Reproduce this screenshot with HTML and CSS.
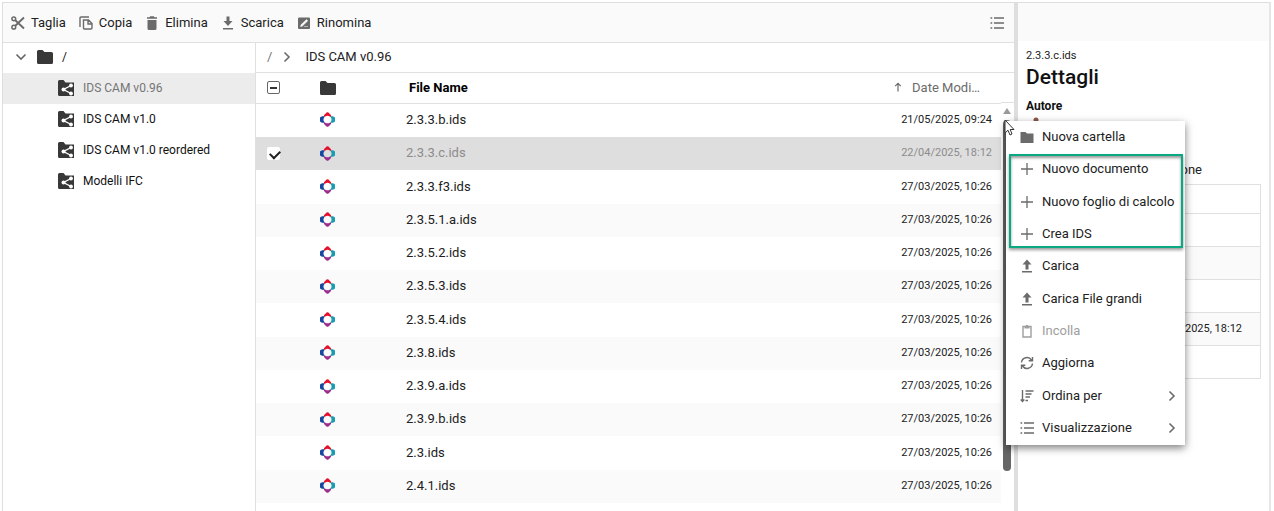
FILE: index.html
```html
<!DOCTYPE html>
<html lang="it">
<head>
    <meta charset="UTF-8">
    <meta name="viewport" content="width=device-width, initial-scale=1.0">
    <title>IDS CAM v0.96</title>
    <link rel="stylesheet" href="styles.css">
</head>
<body>

    <!-- Shared icons -->
    <svg class="sprite" aria-hidden="true">
        <symbol id="i-folder" viewBox="0 0 16 14"><path d="M0 1.5Q0 0 1.5 0H5.5L7.5 2H14.5Q16 2 16 3.5V12.5Q16 14 14.5 14H1.5Q0 14 0 12.5Z"/></symbol>
        <symbol id="i-shared" viewBox="0 0 16 16"><path d="M0 1.500Q0 0 1.500 0H5.500L7.500 2.500H16V16H1.500Q0 16 0 14.500Z"/><path d="M14 5L5.500 9.500L14 14" fill="none" stroke="#fff" stroke-width="1.400"/><g fill="#fff"><circle cx="5.500" cy="9.500" r="2"/><circle cx="13" cy="5.500" r="1.900"/><circle cx="13" cy="13.500" r="1.900"/></g></symbol>
        <symbol id="i-ids" viewBox="0 0 16 16"><path d="M4 4.500Q4 3 5.500 2L7 0.600Q8 0 9 0.600L10.500 2Q12 3 12 4.500L11 5.200Q8 2.600 5 5.200Z" fill="#e4112c"/><path d="M4 11.500Q4 13 5.500 14L7 15.400Q8 16 9 15.400L10.500 14Q12 13 12 11.500L11 10.800Q8 13.400 5 10.800Z" fill="#9b2d8c"/><path d="M3.500 4.200L1 5Q0 5.500 0 6.500V9.500Q0 10.500 1 11L3.500 11.800L4.800 10.800Q2.600 8 4.800 5.200Z" fill="#17479e"/><path d="M12.500 4.200L15 5Q16 5.500 16 6.500V9.500Q16 10.500 15 11L12.500 11.800L11.200 10.800Q13.400 8 11.200 5.200Z" fill="#1a9db0"/></symbol>
        <symbol id="i-plus" viewBox="0 0 14 14"><path d="M7 1V13M1 7H13" fill="none" stroke="currentColor" stroke-width="1.300"/></symbol>
        <symbol id="i-upload" viewBox="0 0 14 14"><path d="M7 0.500L11.500 5.500H8.500V10.500H5.500V5.500H2.500ZM2 12H12V13.500H2Z"/></symbol>
        <symbol id="i-list" viewBox="0 0 14 14"><path d="M4 2H14M4 7H14M4 12H14M0.500 2H2.200M0.500 7H2.200M0.500 12H2.200" fill="none" stroke="currentColor" stroke-width="1.400"/></symbol>
        <symbol id="i-chevron" viewBox="0 0 14 14"><path d="M4.500 2.500L9 7L4.500 11.500" fill="none" stroke="currentColor" stroke-width="1.600"/></symbol>
    </svg>

    <div class="manager">
        <div class="main">
            <div class="toolbar">
                <button><svg class="icon" viewBox="0 0 14 14"><g fill="none" stroke="currentColor" stroke-width="1.500"><circle cx="2.800" cy="2.800" r="1.900"/><circle cx="2.800" cy="11.200" r="1.900"/><path d="M4.300 4.200L13 12.500M4.300 9.800L13 1.500" stroke-width="1.900"/></g></svg>Taglia</button>
                <button><svg class="icon" viewBox="0 0 14 14"><path d="M10 1H2Q1 1 1 2V11M4.500 4H9.500L13 7.500V12Q13 13 12 13H5.500Q4.500 13 4.500 12ZM9 4V8H13" fill="none" stroke="currentColor" stroke-width="1.400"/></svg>Copia</button>
                <button><svg class="icon" viewBox="0 0 14 14"><path d="M2.500 4H11.500V12.500Q11.500 14 10 14H4Q2.500 14 2.500 12.500ZM2 1.200H4.500L5.200 0.200H8.800L9.500 1.200H12V2.800H2Z"/></svg>Elimina</button>
                <button><svg class="icon" viewBox="0 0 14 14"><path d="M5.500 0.500H8.500V5H11.500L7 10L2.500 5H5.500ZM2 12H12V13.500H2Z"/></svg>Scarica</button>
                <button><svg class="icon" viewBox="0 0 14 14"><rect x="1" y="1.500" width="12" height="11.500" rx="1"/><path d="M3.500 10.500L4 8.800L9.500 3.500L10.800 4.800L5.200 10.200ZM7 10.500H11" fill="#fafafa" stroke="#fafafa" stroke-width="0.500"/></svg>Rinomina</button>
                <button class="view-button" aria-label="Visualizzazione"><svg class="icon"><use href="#i-list"/></svg></button>
            </div>

            <div class="panes">
                <ul class="tree">
                    <li class="root"><svg class="toggle"><use href="#i-chevron"/></svg><svg class="folder"><use href="#i-folder"/></svg>/</li>
                    <li class="selected"><svg class="folder"><use href="#i-shared"/></svg>IDS CAM v0.96</li>
                    <li><svg class="folder"><use href="#i-shared"/></svg>IDS CAM v1.0</li>
                    <li><svg class="folder"><use href="#i-shared"/></svg>IDS CAM v1.0 reordered</li>
                    <li><svg class="folder"><use href="#i-shared"/></svg>Modelli IFC</li>
                </ul>

                <div class="files">
                    <div class="breadcrumb"><span>/</span><svg class="icon"><use href="#i-chevron"/></svg><a href="#">IDS CAM v0.96</a></div>
                    <div class="list">
                        <table class="file-table">
                            <thead>
                                <tr>
                                    <th class="check"><input type="checkbox" class="partial" aria-label="Seleziona tutto"></th>
                                    <th class="type"><svg class="folder"><use href="#i-folder"/></svg></th>
                                    <th class="name">File Name</th>
                                    <th class="date"><svg class="sort" viewBox="0 0 10 12"><path d="M5 11.500V1.500M1.500 5L5 1.500L8.500 5" fill="none" stroke="currentColor" stroke-width="1.500"/></svg>Date Modi…</th>
                                </tr>
                            </thead>
                            <tbody id="rows"></tbody>
                        </table>
                        <div class="scrollbar">
                            <div class="scroll-head"></div>
                            <div class="scroll-up"></div>
                            <div class="thumb"></div>
                        </div>
                    </div>
                </div>
            </div>
        </div>

        <div class="splitter"></div>

        <div class="details">
            <div class="details-bar"></div>
            <div class="details-body">
                <p class="file">2.3.3.c.ids</p>
                <h1>Dettagli</h1>
                <h2>Autore</h2>
                <svg class="avatar" viewBox="0 0 16 16"><circle cx="8" cy="3" r="2.500" fill="#8a5a48"/><path d="M3 15Q3 6 8 6T13 15Z" fill="#607d8b"/></svg>
                <p class="tab">Versione</p>
                <table class="info">
                    <tr><td></td></tr>
                    <tr><td></td></tr>
                    <tr><td></td></tr>
                    <tr><td></td></tr>
                    <tr><td>22/04/2025, 18:12</td></tr>
                    <tr><td></td></tr>
                </table>
            </div>

            <div class="menu">
                <button><svg class="icon" viewBox="0 0 14 14"><path d="M0.500 2H5.500L7 3.500H13.500V13H0.500Z"/></svg>Nuova cartella</button>
                <button><svg class="icon"><use href="#i-plus"/></svg>Nuovo documento</button>
                <button><svg class="icon"><use href="#i-plus"/></svg>Nuovo foglio di calcolo</button>
                <button><svg class="icon"><use href="#i-plus"/></svg>Crea IDS</button>
                <button><svg class="icon"><use href="#i-upload"/></svg>Carica</button>
                <button><svg class="icon"><use href="#i-upload"/></svg>Carica File grandi</button>
                <button disabled><svg class="icon" viewBox="0 0 14 14"><path d="M3 2.500H11V13H3Z" fill="none" stroke="currentColor" stroke-width="1.400"/><path d="M4.500 2.500H5.500L6 1H8L8.500 2.500H9.500V4.500H4.500Z"/></svg>Incolla</button>
                <button><svg class="icon" viewBox="0 0 14 14"><path d="M1.500 6.500A5.500 5.500 0 0 1 11.500 4M12.500 1V4.800H8.700M12.500 7.500A5.500 5.500 0 0 1 2.500 10M1.500 13V9.200H5.300" fill="none" stroke="currentColor" stroke-width="1.400"/></svg>Aggiorna</button>
                <button><svg class="icon" viewBox="0 0 14 14"><path d="M2.500 1V12.500M0.700 10.500L2.500 12.500L4.300 10.500M5.500 2H13.500M5.500 5H11.500M5.500 8H10M5.500 11.500H8" fill="none" stroke="currentColor" stroke-width="1.400"/></svg>Ordina per<svg class="icon arrow"><use href="#i-chevron"/></svg></button>
                <button><svg class="icon"><use href="#i-list"/></svg>Visualizzazione<svg class="icon arrow"><use href="#i-chevron"/></svg></button>
                <div class="highlight"></div>
                <svg class="cursor" viewBox="0 0 11 17"><path d="M1 1V14L4 11.200L6 16L8 15L6.200 10.500H10Z" fill="#fff" stroke="#333" stroke-width="1"/></svg>
            </div>
        </div>
    </div>

    <script>
        const files = [
            ['2.3.3.b.ids', '21/05/2025, 09:24'],
            ['2.3.3.c.ids', '22/04/2025, 18:12'],
            ['2.3.3.f3.ids', '27/03/2025, 10:26'],
            ['2.3.5.1.a.ids', '27/03/2025, 10:26'],
            ['2.3.5.2.ids', '27/03/2025, 10:26'],
            ['2.3.5.3.ids', '27/03/2025, 10:26'],
            ['2.3.5.4.ids', '27/03/2025, 10:26'],
            ['2.3.8.ids', '27/03/2025, 10:26'],
            ['2.3.9.a.ids', '27/03/2025, 10:26'],
            ['2.3.9.b.ids', '27/03/2025, 10:26'],
            ['2.3.ids', '27/03/2025, 10:26'],
            ['2.4.1.ids', '27/03/2025, 10:26']
        ];
        const selected = '2.3.3.c.ids';

        document.getElementById('rows').innerHTML = files.map(([name, date]) => {
            const active = name === selected;
            return `<tr class="${active ? 'selected' : ''}">
                <td class="check">${active ? `<input type="checkbox" checked aria-label="${name}">` : ''}</td>
                <td class="type"><svg class="ids"><use href="#i-ids"/></svg></td>
                <td class="name">${name}</td>
                <td class="date">${date}</td>
            </tr>`;
        }).join('');
    </script>

</body>
</html>
```
FILE: styles.css
```css
* {
    box-sizing: border-box;
}
body {
    margin: 0;
    padding: 2px 3px 0 2px;
    height: 100vh;
    overflow: hidden;
    background-color: white;
    color: #212121;
    font-family: Roboto, "Liberation Sans", sans-serif;
    font-size: 13px;
    line-height: 16px;
}
button {
    display: flex;
    align-items: center;
    border: none;
    padding: 0;
    background: none;
    color: inherit;
    font: inherit;
    cursor: pointer;
}
svg {
    flex: none;
    fill: currentColor;
}
.sprite {
    position: absolute;
    width: 0;
    height: 0;
}
.icon {
    width: 14px;
    height: 14px;
    color: #6b6b6b;
}
.folder {
    width: 16px;
    height: 16px;
    color: #383838;
}
.manager {
    display: flex;
    height: 100%;
    border: 1px solid #dedede;
    border-right: 2px solid #e6e6e6;
    border-bottom: none;
}
.main {
    flex: 1;
    display: flex;
    flex-direction: column;
    min-width: 0;
}

/* Toolbar */
.toolbar {
    display: flex;
    align-items: center;
    gap: 13px;
    height: 40px;
    padding: 0 10px 0 8px;
    background-color: #fafafa;
    border-bottom: 1px solid #e0e0e0;
}
.toolbar button {
    gap: 6px;
}
.toolbar .view-button {
    margin-left: auto;
}

/* Folder tree */
.panes {
    flex: 1;
    display: flex;
    min-height: 0;
}
.tree {
    width: 253px;
    margin: 0;
    padding: 0;
    list-style: none;
    border-right: 1px solid #e0e0e0;
    font-size: 12px;
}
.tree li {
    display: flex;
    align-items: center;
    gap: 9px;
    height: 31px;
    padding: 0 0 2px 55px;
    color: #111;
}
.tree .root {
    height: 30px;
    padding-left: 11px;
}
.tree .toggle {
    width: 14px;
    height: 14px;
    color: #666;
    transform: rotate(90deg);
}
.tree .selected {
    background-color: #ececec;
    color: #757575;
}

/* File list */
.files {
    flex: 1;
    display: flex;
    flex-direction: column;
    min-width: 0;
}
.breadcrumb {
    display: flex;
    align-items: center;
    height: 30px;
    gap: 8px;
    padding: 0 0 2px 11px;
    border-bottom: 1px solid #e0e0e0;
    color: #757575;
}
.breadcrumb a {
    color: #212121;
    text-decoration: none;
    margin-left: 3px;
}
.list {
    display: flex;
}
.file-table {
    flex: 1;
    height: 430px;
    table-layout: fixed;
    border-collapse: collapse;
}
.file-table th {
    height: 30px;
    padding: 0;
    border-bottom: 1px solid #e0e0e0;
    text-align: left;
}
.file-table td {
    padding: 0 0 1px;
}
.file-table svg {
    display: block;
}
.file-table .check {
    width: 64px;
    padding-left: 11px;
}
.file-table .type {
    width: 86px;
}
.file-table th.name {
    padding-left: 3px;
    color: #000;
}
.file-table .date {
    width: 108px;
    padding-right: 9px;
    font-size: 11px;
    text-align: right;
}
.file-table th.date {
    padding-right: 21px;
    color: #6b6b6b;
    font-size: 13px;
    font-weight: 400;
    white-space: nowrap;
}
.file-table .sort {
    display: inline-block;
    width: 8px;
    height: 10px;
    margin-right: 10px;
}
.file-table tbody tr:nth-child(even) {
    background-color: #fafafa;
}
.file-table tbody tr.selected {
    background-color: #dedede;
    color: #8c8c8c;
}
.ids {
    width: 15px;
    height: 15px;
}
input[type="checkbox"] {
    appearance: none;
    display: block;
    position: relative;
    width: 13px;
    height: 13px;
    margin: 0;
    border-radius: 2px;
    background-color: white;
}
input.partial {
    border: 1px solid #666;
}
input.partial::after {
    content: "";
    position: absolute;
    inset: 5px 2px 4px;
    background-color: #333;
}
input:checked::after {
    content: "";
    position: absolute;
    top: 3px;
    left: 3px;
    width: 8px;
    height: 5px;
    border: solid #222;
    border-width: 0 0 2px 2px;
    transform: rotate(-45deg);
}

/* Scrollbar */
.scrollbar {
    display: flex;
    flex-direction: column;
    align-items: center;
    width: 13px;
}
.scroll-head {
    width: 100%;
    height: 30px;
    border-bottom: 1px solid #e0e0e0;
}
.scroll-up {
    margin: 5px 1px 0 0;
    border: 4px solid transparent;
    border-top: none;
    border-bottom: 6px solid #9a9a9a;
}
.thumb {
    width: 8px;
    height: 351px;
    margin: 6px 1px 0 0;
    border-radius: 4px;
    background-color: #666;
}

/* Details */
.splitter {
    width: 4px;
    background-color: #dedede;
}
.details {
    position: relative;
    width: 251px;
}
.details-bar {
    height: 38px;
    background-color: #fafafa;
}
.details-body {
    padding: 7px 8px 0;
}
.details p,
.details h1,
.details h2 {
    margin: 0;
}
.details .file {
    font-size: 11px;
}
.details h1 {
    color: #111;
    font-size: 21px;
    font-weight: 500;
    line-height: 26px;
}
.details h2 {
    margin-top: 8px;
    color: #111;
    font-size: 12px;
    font-weight: 700;
    line-height: 16px;
}
.avatar {
    display: block;
    width: 16px;
    height: 16px;
    margin: 3px 0 0 2px;
}
.details .tab {
    margin-top: 29px;
    padding-right: 59px;
    text-align: right;
}
.info {
    width: 100%;
    margin-top: 6px;
    border-collapse: collapse;
    font-size: 11px;
    text-align: right;
}
.info td {
    height: 33px;
    padding: 0 18px 0 0;
    border: 1px solid #e0e0e0;
}
.info tr:first-child td {
    height: 29px;
}
.info tr:nth-child(odd):not(:first-child) {
    background-color: #fafafa;
}

/* Context menu */
.menu {
    position: absolute;
    top: 118px;
    left: -12px;
    display: flex;
    flex-direction: column;
    width: 179px;
    height: 324px;
    padding-bottom: 1px;
    background-color: white;
    box-shadow: 0 3px 8px rgba(0, 0, 0, 0.5);
}
.menu button {
    flex: 1;
    gap: 8px;
    padding: 0 6px 0 14px;
}
.menu button:disabled,
.menu button:disabled .icon {
    color: #9e9e9e;
}
.menu .arrow {
    margin-left: auto;
}
.highlight {
    position: absolute;
    top: 33px;
    left: 3px;
    width: 174px;
    height: 94px;
    border: 2px solid #0aa883;
    box-shadow: 0 2px 3px rgba(0, 0, 0, 0.4), inset 0 2px 3px rgba(0, 0, 0, 0.4);
    pointer-events: none;
}
.cursor {
    position: absolute;
    top: -2px;
    left: -2px;
    width: 11px;
    height: 17px;
}
```
